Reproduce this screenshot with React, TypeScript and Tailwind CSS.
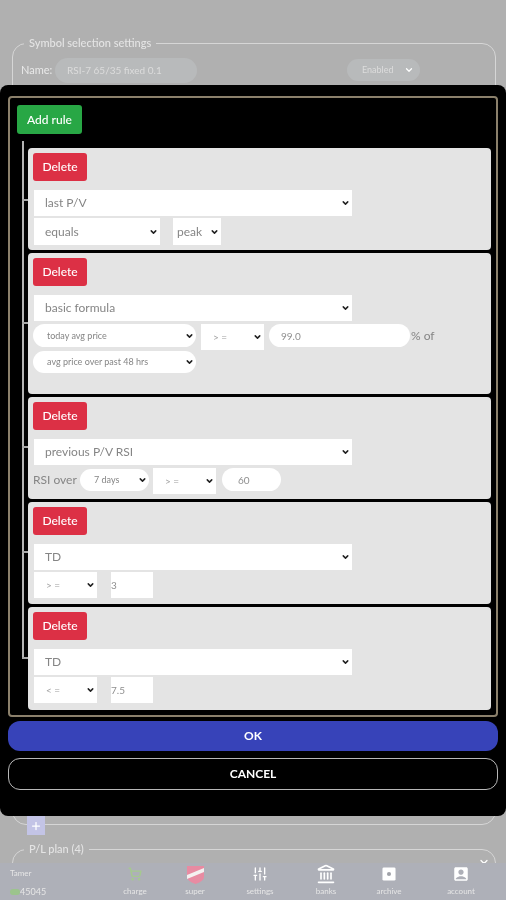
import { Landmark, SlidersVertical, ShoppingCart, ChevronDown, Plus } from 'lucide-react'
import { MdAccountBox } from 'react-icons/md'

const font = { fontFamily: 'Lato, "Open Sans", sans-serif' }

function Sel({ label, className, box }: { label: string; className: string; box: string }) {
  return (
    <span className={`relative block shrink-0 ${box}`}>
      <select
        defaultValue={label}
        className={`block h-full w-full appearance-none border-0 bg-white text-[#858585] outline-none ${className}`}
      >
        <option>{label}</option>
      </select>
      <ChevronDown size={9} strokeWidth={4} className="absolute right-[2px] top-1/2 -translate-y-1/2 text-[#222222]" />
    </span>
  )
}

function Num({ value, className }: { value: string; className: string }) {
  return (
    <input
      readOnly
      value={value}
      className={`shrink-0 border-0 bg-white text-[10px] text-[#8f8f8f] outline-none ${className}`}
    />
  )
}

function Rule({ label, h, tick, children }: { label: string; h: string; tick: string; children: React.ReactNode }) {
  return (
    <div className={`relative ml-[11px] w-[463px] rounded-[4px] bg-[#e4e4e4] px-[5px] pt-[5px] ${h}`}>
      <span className={`absolute left-[-6px] h-[1.5px] w-[6px] bg-[#a8a8a8] ${tick}`} />
      <button className="block h-[28px] w-[54px] rounded-[3px] bg-[#dc3045] text-[12px] font-medium text-white">
        Delete
      </button>
      <Sel label={label} box="mt-[9px] ml-px w-[318px] h-[26px]" className="pl-[11px] text-[12px]" />
      {children}
    </div>
  )
}

const navItems = [
  { label: 'charge', x: 'w-[60px]', icon: <ShoppingCart size={14} strokeWidth={2.5} className="text-[#a5c98f]" /> },
  {
    label: 'super',
    x: 'w-[60px]',
    icon: (
      <svg width="19" height="19" viewBox="0 0 19 19">
        <path d="M1 1 L18 1 L18 12 Q18 16 9.5 19 Q1 16 1 12 Z" fill="#e88ba2" />
        <path d="M1 10 L18 3 L18 7 L1 14 Z" fill="#f4f0f0" />
      </svg>
    ),
  },
  { label: 'settings', x: 'w-[70px]', icon: <SlidersVertical size={16} strokeWidth={2} className="text-white" /> },
  { label: 'banks', x: 'w-[62px]', icon: <Landmark size={20} strokeWidth={2} className="text-white" /> },
  {
    label: 'archive',
    x: 'w-[64px]',
    icon: (
      <svg width="14" height="14" viewBox="0 0 15 15">
        <rect width="14" height="14" x="0.5" y="0.5" rx="1.5" fill="#ffffff" />
        <circle cx="7.5" cy="7.5" r="2.2" fill="#a0a2a8" />
      </svg>
    ),
  },
  { label: 'account', x: 'w-[80px]', icon: <MdAccountBox size={18} className="text-white" /> },
]

export default function App() {
  return (
    <div className="relative h-[900px] w-[506px] overflow-hidden bg-[#b0b0b0] blur-[0.4px]" style={font}>
      {/* page behind the dialog */}
      <div className="pl-3 pr-[10px] pt-[35px]">
        <fieldset className="h-[790px] rounded-[14px] border border-[#d6d6d6] px-[8px] pt-[6px]">
          <legend className="ml-[3px] px-[5px] text-[11px] font-medium text-[#e4e4e4]">Symbol selection settings</legend>
          <div className="flex items-center text-[#e8e8e8]">
            <span className="w-[34px] text-[11px]">Name:</span>
            <span className="h-[25px] w-[142px] rounded-full bg-[#b8babb] pl-3 text-[10px] leading-[25px] text-[#dcdcdc]">
              RSI-7 65/35 fixed 0.1
            </span>
            <span className="ml-[150px] flex h-[22px] w-[73px] items-center justify-between rounded-full bg-[#b8babb] pl-[15px] pr-[6px] text-[9px] text-[#dcdcdc]">
              Enabled <ChevronDown size={10} strokeWidth={3} className="text-white" />
            </span>
          </div>
        </fieldset>
        <fieldset className="mt-[16px] h-[80px] rounded-[14px] border border-[#d6d6d6] px-[8px]">
          <legend className="ml-[3px] px-[5px] text-[11px] font-medium text-[#e4e4e4]">P/L plan (4)</legend>
        </fieldset>
      </div>

      {/* plus button under the dialog edge */}
      <div className="absolute left-[27px] top-[816px] flex h-[19px] w-[18px] items-center justify-center bg-[#c3c4e6] text-white">
        <Plus size={12} strokeWidth={2.5} />
      </div>
      <ChevronDown size={12} strokeWidth={2.5} className="absolute left-[478px] top-[856px] text-white" />

      {/* bottom nav */}
      <div className="absolute inset-x-0 bottom-0 flex h-[37px] items-start bg-[#aeb0b8] text-white">
        <div className="w-[105px] pl-[10px] pt-[4px] text-[8px] text-[#e6e6e6]">
          <div>Tamer</div>
          <div className="mt-[6px] flex items-center">
            <span className="h-[6px] w-[10px] rounded-full bg-[#9cc48c]" />
            <span className="text-[9px]">45045</span>
          </div>
        </div>
        {navItems.map((n) => (
          <div key={n.label} className={`flex h-full flex-col items-center ${n.x}`}>
            <div className="flex h-[22px] items-center">{n.icon}</div>
            <span className="mt-[1px] text-[8px] leading-[10px] text-[#e6e6e6]">{n.label}</span>
          </div>
        ))}
      </div>

      {/* dialog */}
      <div className="absolute inset-x-0 top-[85px] h-[731px] rounded-[8px] bg-black px-2 pt-[11px]">
        <div className="h-[621px] rounded-[4px] border-2 border-[#8b806b] pl-[7px] pt-[7px]">
          <button className="block h-[29px] w-[65px] rounded-[3px] bg-[#28a745] text-[12px] font-medium text-white">
            Add rule
          </button>
          <div className="relative mt-[14px] flex flex-col gap-[3px]">
            <span className="absolute left-[5px] top-[-7px] h-[517px] w-[1.5px] bg-[#b4b4b4]" />
            <Rule label="last P/V" h="h-[102px]" tick="top-[51px]">
              <div className="ml-px mt-[2px] flex gap-[13px]">
                <Sel label="equals" box="w-[126px] h-[27px]" className="pl-[11px] text-[12px]" />
                <Sel label="peak" box="w-[48px] h-[27px]" className="pl-[4px] text-[12px]" />
              </div>
            </Rule>
            <Rule label="basic formula" h="h-[141px]" tick="top-[69px]">
              <div className="mt-[3px] flex items-start gap-[5px]">
                <Sel label="today avg price" box="w-[163px] h-[23px]" className="rounded-full pl-[14px] text-[9px]" />
                <Sel label="> =" box="w-[63px] h-[26px]" className="pl-[12px] text-[10px] text-[#a0a0a0]" />
                <Num value="99.0" className="h-[23px] w-[141px] rounded-full pl-3" />
                <span className="ml-[-4px] text-[12px] leading-[23px] text-[#858585]">% of</span>
              </div>
              <Sel label="avg price over past 48 hrs" box="mt-[1px] w-[163px] h-[22px]" className="rounded-full pl-[14px] text-[9px]" />
            </Rule>
            <Rule label="previous P/V RSI" h="h-[102px]" tick="top-[49px]">
              <div className="mt-[3px] flex items-start">
                <span className="w-[47px] whitespace-nowrap text-[12px] leading-[23px] text-[#858585]">RSI over</span>
                <Sel label="7 days" box="w-[69px] h-[22px] mt-px" className="rounded-full pl-[14px] text-[9px]" />
                <Sel label="> =" box="ml-[4px] w-[63px] h-[26px]" className="pl-[12px] text-[10px] text-[#a0a0a0]" />
                <Num value="60" className="ml-[6px] h-[23px] w-[59px] rounded-full pl-4" />
              </div>
            </Rule>
            <Rule label="TD" h="h-[102px]" tick="top-[49px]">
              <div className="ml-px mt-[2px] flex gap-[14px]">
                <Sel label="> =" box="w-[63px] h-[26px]" className="pl-[12px] text-[10px] text-[#a0a0a0]" />
                <Num value="3" className="h-[26px] w-[42px]" />
              </div>
            </Rule>
            <Rule label="TD" h="h-[103px]" tick="top-[50px]">
              <div className="ml-px mt-[2px] flex gap-[14px]">
                <Sel label="< =" box="w-[63px] h-[26px]" className="pl-[12px] text-[10px] text-[#a0a0a0]" />
                <Num value="7.5" className="h-[26px] w-[42px]" />
              </div>
            </Rule>
          </div>
        </div>
        <button className="mt-[4px] block h-[30px] w-[490px] rounded-[12px] bg-[#3743b9] text-[12px] font-bold text-white">
          OK
        </button>
        <button className="mt-[7px] block h-[32px] w-[490px] rounded-[12px] border border-[#b8b8b8] bg-black text-[12px] font-bold text-white">
          CANCEL
        </button>
      </div>
    </div>
  )
}
